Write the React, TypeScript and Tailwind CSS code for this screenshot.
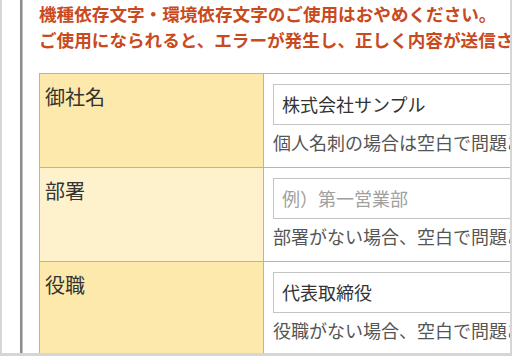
import React from "react";

const font = { fontFamily: '"Noto Sans CJK JP", "Noto Sans", sans-serif' };

type Row = { label: string; value?: string; placeholder?: string; hint: string; bg: string };

const rows: Row[] = [
  { label: "御社名", value: "株式会社サンプル", hint: "個人名刺の場合は空白で問題ありません。", bg: "bg-[#fde9ab]" },
  { label: "部署", placeholder: "例）第一営業部", hint: "部署がない場合、空白で問題ありません。", bg: "bg-[#fef2cd]" },
  { label: "役職", value: "代表取締役", hint: "役職がない場合、空白で問題ありません。", bg: "bg-[#fde9ab]" },
];

export default function App() {
  return (
    <div className="w-[512px] h-[356px] bg-[#d6d6d6] px-[2px] pb-[3px] overflow-hidden" style={font}>
      <div className="h-full bg-white flex overflow-hidden">
        <div className="w-[18px] shrink-0" />
        <div className="w-[2px] shrink-0 bg-[#8c8c8c]" />
        <div className="w-[1px] shrink-0 bg-[#c2c2c2]" />
        <div className="flex-1 min-w-0 pl-[16px] pt-[1px] overflow-hidden">
          <div className="text-[17.6px] leading-[26px] font-bold text-[#c94a1d] whitespace-nowrap">
            <div>機種依存文字・環境依存文字のご使用はおやめください。</div>
            <div>ご使用になられると、エラーが発生し、正しく内容が送信されません。</div>
          </div>
          <div className="mt-[20px] w-[600px] border-t border-l border-[#b4b4b4]">
            {rows.map((r) => (
              <div key={r.label} className="grid grid-cols-[224px_1fr] border-b border-[#b4b4b4]">
                <div className={`${r.bg} border-r border-[#b4b4b4] pl-[5px] pt-[10px] text-[20px] leading-[26px] text-[#333]`}>
                  {r.label}
                </div>
                <div className="pl-[9px] pt-[10px] pb-[11px] whitespace-nowrap">
                  <div className="h-[41px] w-[420px] border border-[#c4c4c4] pl-[8px] flex items-center text-[18px]">
                    {r.value ? (
                      <span className="text-[#333]">{r.value}</span>
                    ) : (
                      <span className="text-[#a0a0a0]">{r.placeholder}</span>
                    )}
                  </div>
                  <div className="mt-[3px] text-[18px] leading-[28px] text-[#555]">{r.hint}</div>
                </div>
              </div>
            ))}
          </div>
        </div>
      </div>
    </div>
  );
}
